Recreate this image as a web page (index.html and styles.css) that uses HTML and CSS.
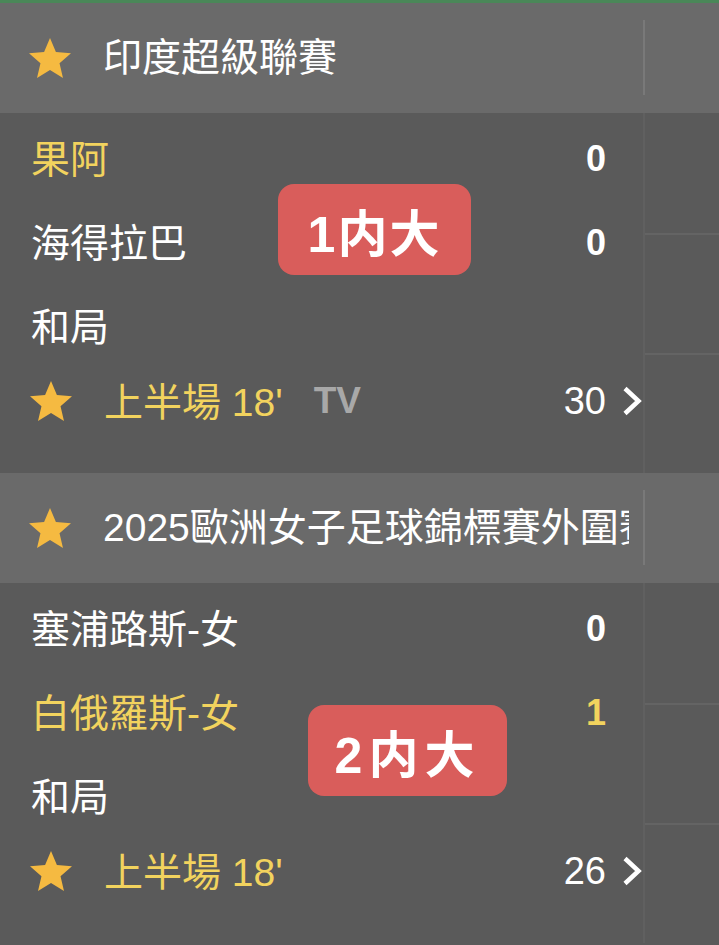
FILE: index.html
```html
<!DOCTYPE html>
<html lang="zh-Hant">
<head>
  <meta charset="UTF-8">
  <meta name="viewport" content="width=device-width, initial-scale=1.0">
  <title>滾球</title>
  <link rel="stylesheet" href="styles.css">
</head>
<body>
  <div class="topbar"></div>

  <section class="league">
    <div class="league-head">
      <div class="head-main">
        <svg class="star" viewBox="2 2 20 19"><path d="M12 17.27L18.18 21l-1.64-7.03L22 9.24l-7.19-.61L12 2 9.19 8.63 2 9.24l5.46 4.73L5.82 21z"/></svg>
        <span class="league-name">印度超級聯賽</span>
      </div>
      <div class="head-side"></div>
    </div>
    <div class="league-body">
      <div class="match">
        <div class="row"><span class="team hot">果阿</span><span class="score">0</span></div>
        <div class="row"><span class="team">海得拉巴</span><span class="score">0</span></div>
        <div class="row"><span class="team">和局</span></div>
        <div class="row foot">
          <svg class="star" viewBox="2 2 20 19"><path d="M12 17.27L18.18 21l-1.64-7.03L22 9.24l-7.19-.61L12 2 9.19 8.63 2 9.24l5.46 4.73L5.82 21z"/></svg>
          <span class="time">上半場 18'</span>
          <span class="tv">TV</span>
          <span class="count">30</span>
          <svg class="chevron" viewBox="0 0 20 30"><polyline points="3,2.5 16.5,15 3,27.5"/></svg>
        </div>
      </div>
      <div class="side">
        <div class="cell"></div>
        <div class="cell"></div>
        <div class="cell"></div>
      </div>
    </div>
    <div class="badge badge-first">1内大</div>
  </section>

  <section class="league">
    <div class="league-head">
      <div class="head-main">
        <svg class="star" viewBox="2 2 20 19"><path d="M12 17.27L18.18 21l-1.64-7.03L22 9.24l-7.19-.61L12 2 9.19 8.63 2 9.24l5.46 4.73L5.82 21z"/></svg>
        <span class="league-name">2025歐洲女子足球錦標賽外圍賽</span>
      </div>
      <div class="head-side"></div>
    </div>
    <div class="league-body">
      <div class="match">
        <div class="row"><span class="team">塞浦路斯-女</span><span class="score">0</span></div>
        <div class="row"><span class="team hot">白俄羅斯-女</span><span class="score hot">1</span></div>
        <div class="row"><span class="team">和局</span></div>
        <div class="row foot">
          <svg class="star" viewBox="2 2 20 19"><path d="M12 17.27L18.18 21l-1.64-7.03L22 9.24l-7.19-.61L12 2 9.19 8.63 2 9.24l5.46 4.73L5.82 21z"/></svg>
          <span class="time">上半場 18'</span>
          <span class="count">26</span>
          <svg class="chevron" viewBox="0 0 20 30"><polyline points="3,2.5 16.5,15 3,27.5"/></svg>
        </div>
      </div>
      <div class="side">
        <div class="cell"></div>
        <div class="cell"></div>
        <div class="cell"></div>
      </div>
    </div>
    <div class="badge badge-second">2内大</div>
  </section>
</body>
</html>
```

FILE: styles.css
```css
html, body {
  margin: 0;
  padding: 0;
}
body {
  background: #5a5a5a;
  color: #fff;
  font-family: "Liberation Sans", "Noto Sans CJK TC", sans-serif;
  overflow: hidden;
}
.topbar {
  height: 3px;
  background: #4a8758;
}
.league {
  position: relative;
}
.league-head {
  display: flex;
  height: 110px;
  background: #6a6a6a;
}
.head-main {
  width: 643px;
  box-sizing: border-box;
  display: flex;
  align-items: center;
  gap: 32px;
  padding-left: 29px;
}
.star {
  width: 42px;
  height: 40px;
  flex: none;
  fill: #f5ba41;
}
.league-name {
  font-size: 39px;
  white-space: nowrap;
  overflow: hidden;
  width: 526px;
  padding-bottom: 8px;
}
.head-side {
  flex: 1;
  display: flex;
}
.head-side::before {
  content: '';
  width: 2px;
  margin: 17px 0 18px;
  background: #797979;
}
.league-body {
  display: flex;
}
.match {
  width: 643px;
  padding-top: 4px;
  box-sizing: border-box;
}
.row {
  height: 84px;
  display: flex;
  align-items: center;
  padding: 0 17px 0 31px;
}
.team {
  flex: 1;
  font-size: 39px;
  padding-bottom: 7px;
}
.score {
  width: 60px;
  text-align: center;
  font-size: 36px;
  font-weight: bold;
}
.hot {
  color: #f2d35e;
}
.foot {
  height: 64px;
  padding: 0 1px 0 30px;
}
.foot .star {
  margin-right: 32px;
}
.time {
  font-size: 39px;
  color: #f2d35e;
  white-space: nowrap;
  padding-bottom: 5px;
}
.tv {
  margin-left: 31px;
  font-size: 37px;
  font-weight: bold;
  color: #a8a8a8;
}
.count {
  margin-left: auto;
  font-size: 38px;
}
.chevron {
  width: 20px;
  height: 30px;
  margin-left: 16px;
  fill: none;
  stroke: #fff;
  stroke-width: 4.5;
}
.side {
  flex: 1;
  display: flex;
  flex-direction: column;
  border-left: 2px solid #606060;
}
.cell {
  height: 120px;
  box-sizing: border-box;
}
.cell + .cell {
  border-top: 2px solid #646464;
}
.badge {
  position: absolute;
  height: 91px;
  display: flex;
  align-items: center;
  justify-content: center;
  background: #d95d5b;
  border-radius: 16px;
  font-size: 50px;
  font-weight: bold;
  letter-spacing: 2px;
}
.badge-first {
  left: 278px;
  top: 181px;
  width: 193px;
}
.badge-second {
  left: 308px;
  top: 232px;
  width: 199px;
  letter-spacing: 6px;
}
```
